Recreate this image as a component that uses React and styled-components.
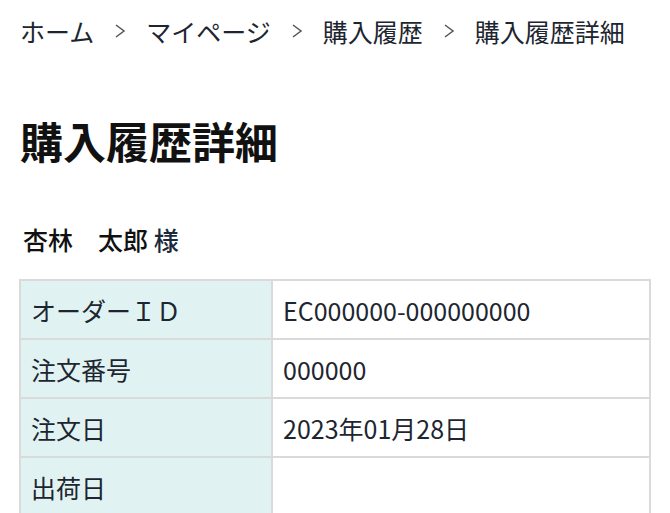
import React from "react";
import styled, { createGlobalStyle } from "styled-components";

const Global = createGlobalStyle`
  html, body { margin: 0; padding: 0; background: #fff; }
  body { font-family: "Noto Sans CJK JP", "Noto Sans", sans-serif; color: #1d2630; }
`;

const Page = styled.div`
  padding: 0 19px 0 19px;
`;

const Crumbs = styled.nav`
  display: flex;
  align-items: center;
  gap: 20px;
  height: 62px;
  padding-left: 1px;
  font-size: 25px;
  line-height: 1;
  color: #1d2630;
`;

const Sep = styled.span`
  display: inline-flex;
  color: #555;
`;

const Title = styled.h1`
  margin: 45px 0 0 1px;
  font-size: 43px;
  line-height: 66px;
  font-weight: 700;
  color: #111;
`;

const Name = styled.div`
  margin: 46px 0 0 4px;
  font-size: 25px;
  line-height: 40px;
  font-weight: 500;
  color: #111;
  white-space: pre;
`;

const Sama = styled.span`
  color: #1b2a3a;
`;

const Table = styled.table`
  margin-top: 20px;
  width: 632px;
  border-collapse: collapse;
  table-layout: fixed;
  font-size: 25px;
`;

const Label = styled.th`
  width: 252px;
  height: 59px;
  padding: 0 10px;
  box-sizing: border-box;
  background: #e0f3f2;
  border: 2px solid #dadada;
  text-align: left;
  font-weight: 400;
  color: #1d2630;
`;

const Value = styled.td`
  height: 59px;
  padding: 0 10px;
  box-sizing: border-box;
  border: 2px solid #dadada;
  color: #1d2630;
`;

const Chevron = () => (
  <Sep>
    <svg width="12" height="16" viewBox="0 0 12 16" fill="none">
      <path d="M2 2 L10 8 L2 14" stroke="#555" strokeWidth="1.5" />
    </svg>
  </Sep>
);

const rows = [
  ["オーダーＩＤ", "EC000000-000000000"],
  ["注文番号", "000000"],
  ["注文日", "2023年01月28日"],
  ["出荷日", ""],
];

export default function App() {
  const crumbs = ["ホーム", "マイページ", "購入履歴", "購入履歴詳細"];
  return (
    <Page>
      <Global />
      <Crumbs>
        {crumbs.map((c, i) => (
          <React.Fragment key={c}>
            {i > 0 && <Chevron />}
            <span>{c}</span>
          </React.Fragment>
        ))}
      </Crumbs>
      <Title>購入履歴詳細</Title>
      <Name>
        杏林　太郎 <Sama>様</Sama>
      </Name>
      <Table>
        <tbody>
          {rows.map(([l, v]) => (
            <tr key={l}>
              <Label>{l}</Label>
              <Value>{v}</Value>
            </tr>
          ))}
        </tbody>
      </Table>
    </Page>
  );
}
